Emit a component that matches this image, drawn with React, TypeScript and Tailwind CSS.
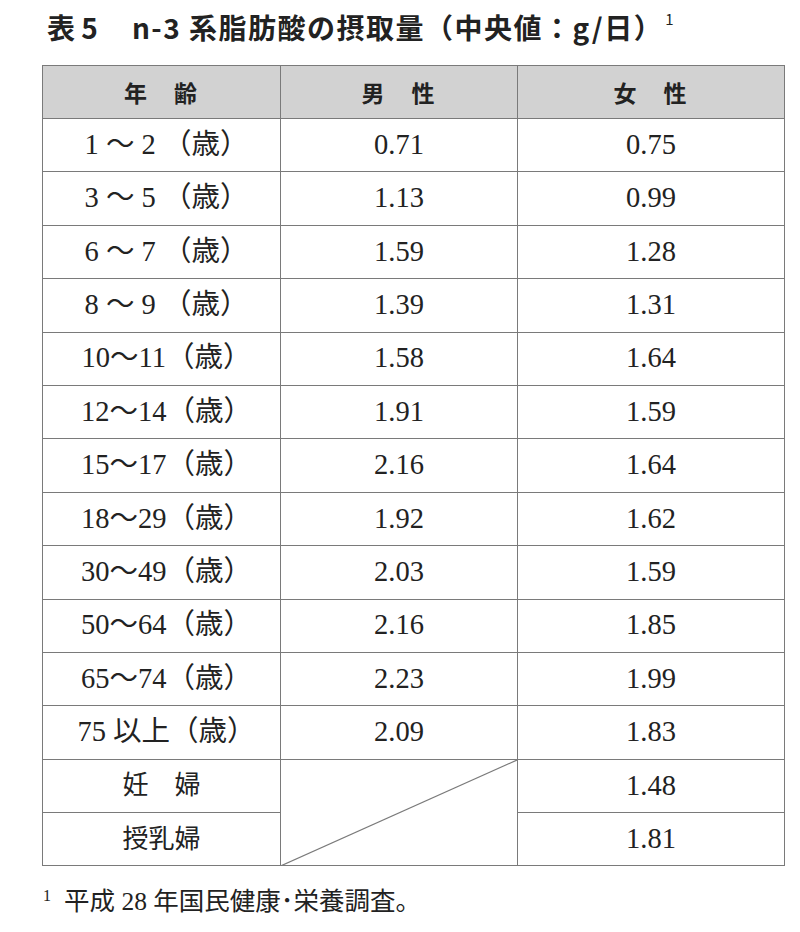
const rows: [string, string, string][] = [
  ['1 ～ 2 （歳）', '0.71', '0.75'],
  ['3 ～ 5 （歳）', '1.13', '0.99'],
  ['6 ～ 7 （歳）', '1.59', '1.28'],
  ['8 ～ 9 （歳）', '1.39', '1.31'],
  ['10～11（歳）', '1.58', '1.64'],
  ['12～14（歳）', '1.91', '1.59'],
  ['15～17（歳）', '2.16', '1.64'],
  ['18～29（歳）', '1.92', '1.62'],
  ['30～49（歳）', '2.03', '1.59'],
  ['50～64（歳）', '2.16', '1.85'],
  ['65～74（歳）', '2.23', '1.99'],
  ['75 以上（歳）', '2.09', '1.83'],
];

const serif = "font-['Liberation_Serif','Noto_Sans_CJK_JP',serif]";
const cell = 'border border-[#7a7a7a] h-[53.4px] p-0 text-center align-middle';

export default function App() {
  return (
    <div className="w-[800px] h-[932px] bg-white text-[#222] overflow-hidden">
      <h1 className="pl-[47px] pt-[13px] h-[65px] text-[28px] font-semibold leading-none font-['Noto_Sans_CJK_JP',sans-serif] flex items-start">
        <span>表 5</span>
        <span className="ml-[34px] tracking-[1.5px]">n-3 系脂肪酸の摂取量（中央値：g/日）</span>
        <span className="text-[15px] font-normal mt-[-2px] ml-[2px]">1</span>
      </h1>

      <table className="ml-[42px] border-collapse table-fixed w-[742px]">
        <colgroup>
          <col className="w-[238px]" />
          <col className="w-[237px]" />
          <col className="w-[267px]" />
        </colgroup>
        <thead>
          <tr className="bg-[#d2d2d2]">
            {['年　齢', '男　性', '女　性'].map((h) => (
              <th
                key={h}
                className={`${cell} h-[53px] text-[23px] font-semibold font-['Noto_Sans_CJK_JP',sans-serif] tracking-[2px]`}
              >
                {h}
              </th>
            ))}
          </tr>
        </thead>
        <tbody className={`${serif} text-[28.5px]`}>
          {rows.map(([age, m, f]) => (
            <tr key={age}>
              <td className={`${cell} pl-[10px]`}>{age}</td>
              <td className={cell}>{m}</td>
              <td className={cell}>{f}</td>
            </tr>
          ))}
          <tr>
            <td className={`${cell} text-[26px]`}>妊　婦</td>
            <td className={`${cell} relative`} rowSpan={2}>
              <svg className="absolute inset-0 w-full h-full" preserveAspectRatio="none" viewBox="0 0 100 100">
                <line x1="0" y1="100" x2="100" y2="0" stroke="#7a7a7a" strokeWidth="1.2" vectorEffect="non-scaling-stroke" />
              </svg>
            </td>
            <td className={cell}>1.48</td>
          </tr>
          <tr>
            <td className={`${cell} text-[26px]`}>授乳婦</td>
            <td className={cell}>1.81</td>
          </tr>
        </tbody>
      </table>

      <div className={`${serif} mt-[20px] pl-[43px] text-[25.5px] leading-[32px] flex items-start`}>
        <span className="text-[16px] leading-none mt-[2px] mr-[13px]">1</span>
        <span>平成 28 年国民健康･栄養調査。</span>
      </div>
    </div>
  );
}
